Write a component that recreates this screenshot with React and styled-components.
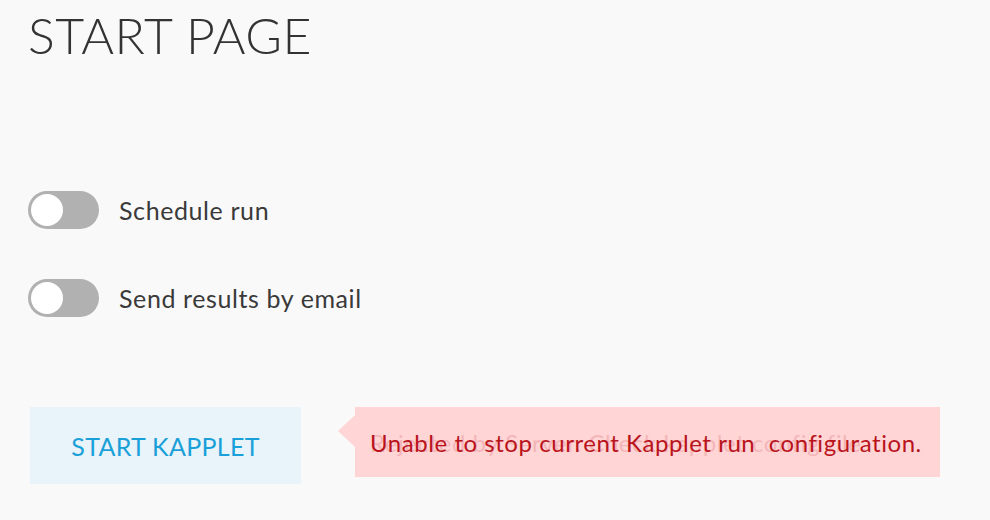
import React from 'react';
import styled, { createGlobalStyle } from 'styled-components';

const GlobalStyle = createGlobalStyle`
  html, body {
    margin: 0;
    padding: 0;
    background: #f9f9f9;
    font-family: 'Lato', 'Open Sans', sans-serif;
  }
`;

const Page = styled.main`
  width: 990px;
  height: 520px;
  box-sizing: border-box;
  padding: 5px 0 0 28px;
  overflow: hidden;
`;

const Title = styled.h1`
  margin: 0;
  font-size: 50px;
  font-weight: 300;
  letter-spacing: 0.5px;
  color: #333;
  line-height: 60px;
`;

const Options = styled.div`
  display: flex;
  flex-direction: column;
  gap: 50px;
  margin-top: 126px;
`;

const Row = styled.label`
  display: flex;
  align-items: center;
  gap: 20px;
  height: 38px;
  font-size: 25px;
  letter-spacing: 0.6px;
  color: #3a3a3a;
`;

const Track = styled.span`
  position: relative;
  width: 71px;
  height: 38px;
  border-radius: 19px;
  background: ${({ $on }) => ($on ? '#1a9fd6' : '#b1b1b1')};
  flex-shrink: 0;
`;

const Knob = styled.span`
  position: absolute;
  top: 3px;
  left: ${({ $on }) => ($on ? '36px' : '3px')};
  width: 32px;
  height: 32px;
  border-radius: 50%;
  background: #fff;
`;

const Actions = styled.div`
  display: flex;
  align-items: flex-start;
  gap: 54px;
  margin-top: 90px;
  padding-left: 2px;
`;

const StartButton = styled.button`
  width: 271px;
  height: 77px;
  border: none;
  background: #e8f3fa;
  color: #1aa0d8;
  font-family: inherit;
  font-size: 25px;
  letter-spacing: 0.3px;
`;

const ErrorTip = styled.div`
  position: relative;
  width: 585px;
  height: 70px;
  box-sizing: border-box;
  padding-left: 15px;
  display: flex;
  align-items: center;
  background: #ffd5d6;
  color: #b9141c;
  font-size: 24px;
  letter-spacing: 0.55px;
  white-space: pre;

  &::before {
    content: '';
    position: absolute;
    left: -17px;
    top: 8px;
    border-style: solid;
    border-width: 16px 17px 16px 0;
    border-color: transparent #ffd5d6 transparent transparent;
  }
`;

const Ghost = styled.span`
  position: absolute;
  left: 15px;
  top: 0;
  height: 100%;
  display: flex;
  align-items: center;
  color: #b9141c;
  opacity: 0.16;
`;

const Toggle = ({ label, on }) => (
  <Row>
    <Track $on={on}>
      <Knob $on={on} />
    </Track>
    {label}
  </Row>
);

const App = () => (
  <Page>
    <GlobalStyle />
    <Title>START PAGE</Title>
    <Options>
      <Toggle label="Schedule run" />
      <Toggle label="Send results by email" />
    </Options>
    <Actions>
      <StartButton>START KAPPLET</StartButton>
      <ErrorTip>
        <Ghost>Rejected by Server. Check kapplet config file.</Ghost>
        {'Unable to stop current Kapplet run  configuration.'}
      </ErrorTip>
    </Actions>
  </Page>
);

export default App;
